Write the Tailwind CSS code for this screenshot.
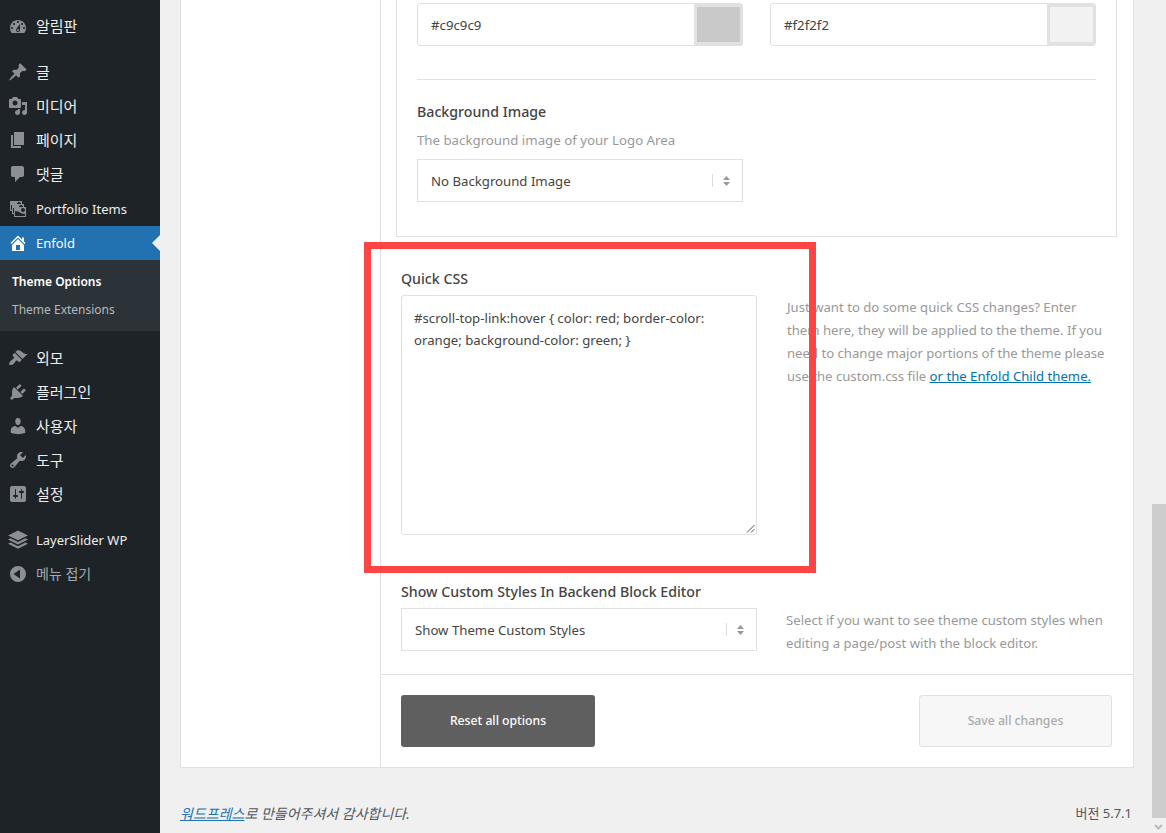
<!DOCTYPE html>
<html lang="ko">
<head>
<meta charset="utf-8">
<title>Enfold Theme Options</title>
<script src="https://cdn.jsdelivr.net/npm/@tailwindcss/browser@4"></script>
</head>
<body class="bg-[#f0f0f1] font-['Noto_Sans','Noto_Sans_CJK_KR',sans-serif] text-[#444]">
<div class="relative flex h-[833px] w-[1166px] overflow-hidden">

  <!-- Sidebar -->
  <aside class="flex h-full w-[160px] shrink-0 flex-col bg-[#1d2327] pt-[10px] text-[15px] text-[#eee]">
    <a class="flex h-[34px] items-center"><svg class="mx-[8px] h-[20px] w-[20px] fill-[#8c8f94]" viewBox="0 0 20 20"><path d="M3.76 16h12.48c1.1-1.37 1.76-3.11 1.76-5 0-4.42-3.58-8-8-8s-8 3.58-8 8c0 1.89.66 3.63 1.76 5zM10 4c.55 0 1 .45 1 1s-.45 1-1 1-1-.45-1-1 .45-1 1-1zM6 6c.55 0 1 .45 1 1s-.45 1-1 1-1-.45-1-1 .45-1 1-1zm8 0c.55 0 1 .45 1 1s-.45 1-1 1-1-.45-1-1 .45-1 1-1zm-5.37 5.55L12 7v6c0 1.1-.9 2-2 2s-2-.9-2-2c0-.57.24-1.08.63-1.45zM4 10c.55 0 1 .45 1 1s-.45 1-1 1-1-.45-1-1 .45-1 1-1zm12 0c.55 0 1 .45 1 1s-.45 1-1 1-1-.45-1-1 .45-1 1-1zm-5 3c0-.55-.45-1-1-1s-1 .45-1 1 .45 1 1 1 1-.45 1-1z" fill-rule="evenodd"/></svg><span class="mb-[2px]">알림판</span></a>
    <div class="h-[11px]"></div>
    <a class="flex h-[34px] items-center"><svg class="mx-[8px] h-[20px] w-[20px] fill-[#8c8f94]" viewBox="0 0 20 20"><path d="M10.44 3.02l1.82-1.82 6.36 6.35-1.83 1.82c-1.05-.68-2.48-.57-3.41.36l-.75.75c-.92.93-1.04 2.35-.35 3.41l-1.83 1.82-2.41-2.41-2.8 2.79c-.42.42-3.38 2.71-3.8 2.29s1.86-3.39 2.28-3.81l2.79-2.79L4.1 9.36l1.83-1.82c1.05.69 2.48.57 3.4-.36l.75-.75c.93-.92 1.05-2.35.36-3.41z"/></svg>글</a>
    <a class="flex h-[34px] items-center"><svg class="mx-[8px] h-[20px] w-[20px] fill-[#8c8f94]" viewBox="0 0 20 20"><path d="M13 11V4c0-.55-.45-1-1-1h-1.67L9 1H5L3.67 3H2c-.55 0-1 .45-1 1v7c0 .55.45 1 1 1h10c.55 0 1-.45 1-1zM7 4.5c1.38 0 2.5 1.12 2.5 2.5S8.38 9.5 7 9.5 4.5 8.38 4.5 7 5.62 4.5 7 4.5zM14 6h5v10.5c0 1.38-1.12 2.5-2.5 2.5S14 17.88 14 16.5s1.12-2.5 2.5-2.5c.17 0 .34.02.5.05V9h-3V6zm-4 8.05V13h2v3.5c0 1.38-1.12 2.5-2.5 2.5S7 17.88 7 16.5 8.12 14 9.5 14c.17 0 .34.02.5.05z" fill-rule="evenodd"/></svg>미디어</a>
    <a class="flex h-[34px] items-center"><svg class="mx-[8px] h-[20px] w-[20px] fill-[#8c8f94]" viewBox="0 0 20 20"><path d="M6 15V2h10v13H6zm-1 1h8v2H3V5h2v11z"/></svg>페이지</a>
    <a class="flex h-[35px] items-center pb-px"><svg class="mx-[8px] h-[20px] w-[20px] fill-[#8c8f94]" viewBox="0 0 20 20"><path d="M5 2h9c1.1 0 2 .9 2 2v7c0 1.1-.9 2-2 2h-2l-5 5v-5H5c-1.1 0-2-.9-2-2V4c0-1.1.9-2 2-2z"/></svg>댓글</a>
    <a class="flex h-[34px] items-center text-[13px]"><svg class="mx-[8px] h-[20px] w-[20px] fill-[#8c8f94]" viewBox="0 0 20 20"><path d="M4 15v-3H2V2h12v3h2v3h2v10H6v-3H4zm7-12c-1.1 0-2 .9-2 2h4c0-1.1-.89-2-2-2zm-7 8V6H3v5h1zm7-3h4c0-1.1-.89-2-2-2-1.1 0-2 .9-2 2zm-5 6V9H5v5h1zm9-1c1.1 0 2-.89 2-2 0-1.1-.9-2-2-2s-2 .9-2 2c0 1.11.9 2 2 2zm2 4v-2c-5 0-5-3-10-3v5h10z" fill-rule="evenodd"/></svg><span class="mt-[2px]">Portfolio Items</span></a>
    <a class="relative flex h-[34px] items-center bg-[#2271b1] text-[13px] text-white"><svg class="mx-[8px] h-[20px] w-[20px] fill-white" viewBox="0 0 20 20"><path d="M16 8.5l1.53 1.53-1.06 1.06L10 4.62l-6.47 6.47-1.06-1.06L10 2.5l4 4v-2h2v4zm-6-2.46l6 5.99V18H4v-5.97zM12 17v-5H8v5h4z" fill-rule="evenodd"/></svg><span class="mt-[2px]">Enfold</span><span class="absolute right-0 top-[9px] h-0 w-0 border-y-[8px] border-r-[8px] border-y-transparent border-r-[#f0f0f1]"></span></a>
    <div class="flex h-[71px] flex-col bg-[#2c3338] pt-[8px] text-[12px] leading-[28px]">
      <a class="pl-[12px] font-semibold text-white">Theme Options</a>
      <a class="pl-[12px] text-[#b4b9be]">Theme Extensions</a>
    </div>
    <div class="h-[10px]"></div>
    <a class="flex h-[34px] items-center"><svg class="mx-[8px] h-[20px] w-[20px] fill-[#8c8f94]" viewBox="0 0 20 20"><path d="M14.48 11.06L7.41 3.99l1.5-1.5c.5-.56 2.3-.47 3.51.32 1.21.8 1.43 1.28 2.91 2.1 1.18.64 2.45 1.26 4.45.85zm-.71.71L6.7 4.7 4.93 6.47c-.39.39-.39 1.02 0 1.41l1.06 1.06c.39.39.39 1.03 0 1.42-.6.6-1.43 1.11-2.21 1.69-.35.26-.7.53-1.01.84C1.43 13.71.96 15.12 1.4 16.9c1.78.44 3.19-.03 4.12-.96.31-.31.58-.66.84-1.01.58-.78 1.09-1.61 1.69-2.21.39-.39 1.03-.39 1.42 0l1.06 1.06c.39.39 1.02.39 1.41 0z"/></svg>외모</a>
    <a class="flex h-[34px] items-center"><svg class="mx-[8px] h-[20px] w-[20px] fill-[#8c8f94]" viewBox="0 0 20 20"><path d="M13.11 4.36L9.87 7.6 8 5.73l3.24-3.24c.35-.34 1.05-.2 1.56.32.52.51.66 1.21.31 1.55zm-8 1.77l.91-1.12 9.01 9.01-1.19.84c-.71.71-2.63 1.16-3.82 1.16H6.14L4.9 17.26c-.59.59-1.54.59-2.12 0-.59-.58-.59-1.53 0-2.12l1.24-1.24v-3.88c0-1.13.4-3.19 1.09-3.89zm7.26 3.97l3.24-3.24c.34-.35 1.04-.21 1.55.31.52.51.66 1.21.31 1.55l-3.24 3.25z"/></svg>플러그인</a>
    <a class="flex h-[34px] items-center"><svg class="mx-[8px] h-[20px] w-[20px] fill-[#8c8f94]" viewBox="0 0 20 20"><path d="M10 9.25c-2.27 0-2.73-3.44-2.73-3.44C7 4.02 7.82 2 9.97 2c2.16 0 2.98 2.02 2.71 3.81 0 0-.41 3.44-2.68 3.44zm0 2.57L12.72 10c2.39 0 4.52 2.33 4.52 4.53v2.49s-3.65 1.13-7.24 1.13c-3.65 0-7.24-1.13-7.24-1.13v-2.49c0-2.25 1.94-4.48 4.47-4.48z"/></svg>사용자</a>
    <a class="flex h-[34px] items-center"><svg class="mx-[8px] h-[20px] w-[20px] fill-[#8c8f94]" viewBox="0 0 20 20"><path d="M16.68 9.77c-1.34 1.34-3.3 1.67-4.95.99l-5.41 6.52c-.99.99-2.59.99-3.58 0s-.99-2.59 0-3.57l6.52-5.42c-.68-1.65-.35-3.61.99-4.95 1.28-1.28 3.12-1.62 4.72-1.06l-2.89 2.89 2.82 2.82 2.86-2.87c.53 1.58.18 3.39-1.08 4.65zM3.81 16.21c.4.39 1.04.39 1.43 0 .4-.4.4-1.04 0-1.43-.39-.4-1.03-.4-1.43 0-.39.39-.39 1.03 0 1.43z" fill-rule="evenodd"/></svg>도구</a>
    <a class="flex h-[34px] items-center"><svg class="mx-[8px] h-[20px] w-[20px] fill-[#8c8f94]" viewBox="0 0 20 20"><path d="M18 16V4c0-1.1-.9-2-2-2H4c-1.1 0-2 .9-2 2v12c0 1.1.9 2 2 2h12c1.1 0 2-.9 2-2zM8 11h1c.55 0 1 .45 1 1s-.45 1-1 1H8v1.5c0 .28-.22.5-.5.5s-.5-.22-.5-.5V13H6c-.55 0-1-.45-1-1s.45-1 1-1h1V5.5c0-.28.22-.5.5-.5s.5.22.5.5V11zm5-2h-1c-.55 0-1-.45-1-1s.45-1 1-1h1V5.5c0-.28.22-.5.5-.5s.5.22.5.5V7h1c.55 0 1 .45 1 1s-.45 1-1 1h-1v5.5c0 .28-.22.5-.5.5s-.5-.22-.5-.5V9z" fill-rule="evenodd"/></svg>설정</a>
    <div class="h-[12px]"></div>
    <a class="flex h-[34px] items-center text-[13px]"><svg class="mx-[8px] h-[20px] w-[20px] fill-[#8c8f94]" viewBox="0 0 20 20"><path d="M10 0.5L20 5.4l-10 4.9L0 5.4zM2.6 8.3L10 12l7.4-3.7 2.6 1.3-10 4.9-10-4.9zM2.6 12.5L10 16.2l7.4-3.7 2.6 1.3-10 4.9-10-4.9z"/></svg><span class="mt-[2px]">LayerSlider WP</span></a>
    <a class="flex h-[34px] items-center text-[14px] text-[#a7aaad]"><svg class="mx-[8px] h-[20px] w-[20px] fill-[#8c8f94]" viewBox="0 0 20 20"><path d="M10 2a8 8 0 1 0 0 16 8 8 0 0 0 0-16zm2 3.5v9L5.5 10z" fill-rule="evenodd"/></svg><span class="mb-[2px]">메뉴 접기</span></a>
  </aside>

  <!-- Main -->
  <main class="flex w-[989px] shrink-0 flex-col pl-[20px] pr-[15px]">
    <div class="flex h-[768px] border-x border-b border-[#e1e1e1] bg-white">
      <div class="w-[200px] shrink-0 border-r border-[#e1e1e1]"></div>
      <div class="flex min-w-0 flex-1 flex-col">
        <div class="flex-1">
          <!-- Logo area box -->
          <div class="ml-[15px] mr-[16px] h-[237px] border-x border-b border-[#e1e1e1] px-[20px] pt-[3px]">
            <div class="flex gap-[27px]">
              <div class="flex h-[43px] w-[326px] items-center overflow-hidden rounded-[3px] border border-[#e1e1e1]">
                <span class="flex-1 pl-[13px] pt-[2px] text-[13.25px] text-[#444]">#c9c9c9</span>
                <span class="h-full w-[48px] border-y-[3px] border-l-[3px] border-r-[2px] border-[#e1e1e1] bg-[#c9c9c9]"></span>
              </div>
              <div class="flex h-[43px] w-[326px] items-center overflow-hidden rounded-[3px] border border-[#e1e1e1]">
                <span class="flex-1 pl-[13px] pt-[2px] text-[13.25px] text-[#444]">#f2f2f2</span>
                <span class="h-full w-[48px] border-y-[3px] border-l-[3px] border-r-[2px] border-[#e1e1e1] bg-[#f2f2f2]"></span>
              </div>
            </div>
            <div class="mt-[33px] h-px bg-[#e1e1e1]"></div>
            <div class="mt-[21px] text-[14.2px] font-medium leading-[22px] text-[#444]">Background Image</div>
            <div class="mt-[6px] text-[13.25px] leading-[22px] text-[#999]">The background image of your Logo Area</div>
            <div class="mt-[8px] flex h-[43px] w-[326px] items-center border border-[#e1e1e1] pl-[13px] pr-[12px] text-[13.2px] text-[#444]">
              <span class="flex-1 pt-[2px]">No Background Image</span>
              <span class="mr-[10px] h-[13px] w-px bg-[#ddd]"></span>
              <svg class="h-[10px] w-[7px] fill-[#999]" viewBox="0 0 7 10"><path d="M3.5 0L7 4H0zM3.5 10L0 6h7z"/></svg>
            </div>
          </div>

          <!-- Quick CSS -->
          <div class="mt-[31px] px-[20px]">
            <div class="text-[14.2px] font-medium leading-[22px] text-[#444]">Quick CSS</div>
            <div class="mt-[5px] flex gap-[30px]">
              <div class="relative h-[240px] w-[356px] shrink-0 rounded-[3px] border border-[#e1e1e1] px-[12px] pt-[11px] text-[13.2px] leading-[22px] text-[#444]">
                #scroll-top-link:hover { color: red; border-color: orange; background-color: green; }
                <svg class="absolute bottom-[1px] right-[1px] h-[9px] w-[9px] stroke-[#555]" viewBox="0 0 9 9" fill="none"><path d="M1 8.5L8.5 1M5 8.5L8.5 5"/></svg>
              </div>
              <p class="w-[322px] pt-px text-[13.15px] leading-[23px] text-[#999]">Just want to do some quick CSS changes? Enter them here, they will be applied to the theme. If you need to change major portions of the theme please use the custom.css file <a class="text-[#0073aa] underline">or the Enfold Child theme.</a></p>
            </div>
          </div>

          <!-- Backend styles -->
          <div class="mt-[46px] px-[20px]">
            <div class="text-[14.2px] font-medium leading-[22px] text-[#444]">Show Custom Styles In Backend Block Editor</div>
            <div class="mt-[5px] flex gap-[29px]">
              <div class="flex h-[43px] w-[356px] shrink-0 items-center border border-[#e1e1e1] pl-[13px] pr-[12px] text-[13.2px] text-[#444]">
                <span class="flex-1 pt-[2px]">Show Theme Custom Styles</span>
                <span class="mr-[10px] h-[13px] w-px bg-[#ddd]"></span>
                <svg class="h-[10px] w-[7px] fill-[#999]" viewBox="0 0 7 10"><path d="M3.5 0L7 4H0zM3.5 10L0 6h7z"/></svg>
              </div>
              <p class="w-[322px] pt-px text-[13.15px] leading-[23px] text-[#999]">Select if you want to see theme custom styles when editing a page/post with the block editor.</p>
            </div>
          </div>
        </div>

        <!-- Action bar -->
        <div class="flex h-[93px] items-center justify-between border-t border-[#e1e1e1] px-[20px] pr-[21px]">
          <button class="h-[52px] w-[194px] rounded-[3px] bg-[#5f5f5f] text-[12.2px] font-medium text-white">Reset all options</button>
          <button class="h-[52px] w-[193px] rounded-[3px] border border-[#e1e1e1] bg-[#f7f7f7] text-[12.2px] font-medium text-[#aaa]">Save all changes</button>
        </div>
      </div>
    </div>

    <footer class="flex flex-1 items-center justify-between pt-[26px] text-[14px] text-[#50575e]">
      <span class="italic"><a class="text-[#2271b1] underline">워드프레스</a>로 만들어주셔서 감사합니다.</span>
      <span class="mr-[2px] text-[13px]">버전 5.7.1</span>
    </footer>
  </main>

  <!-- Scrollbar -->
  <div class="flex h-full flex-1 flex-col justify-end">
    <div class="ml-auto h-[314px] w-[14px] bg-[#cdcdcd]"></div>
    <div class="flex h-[15px] justify-end pr-[3px] pt-[5px]">
      <svg class="h-[8px] w-[9px] stroke-[#bbb]" viewBox="0 0 9 8" fill="none" stroke-width="2"><path d="M1 2l3.5 3.5L8 2"/></svg>
    </div>
  </div>

  <!-- Red annotation rectangle -->
  <div class="pointer-events-none absolute left-[364px] top-[242px] h-[331px] w-[452px] border-[7px] border-[#ff4444]"></div>
</div>
</body>
</html>
